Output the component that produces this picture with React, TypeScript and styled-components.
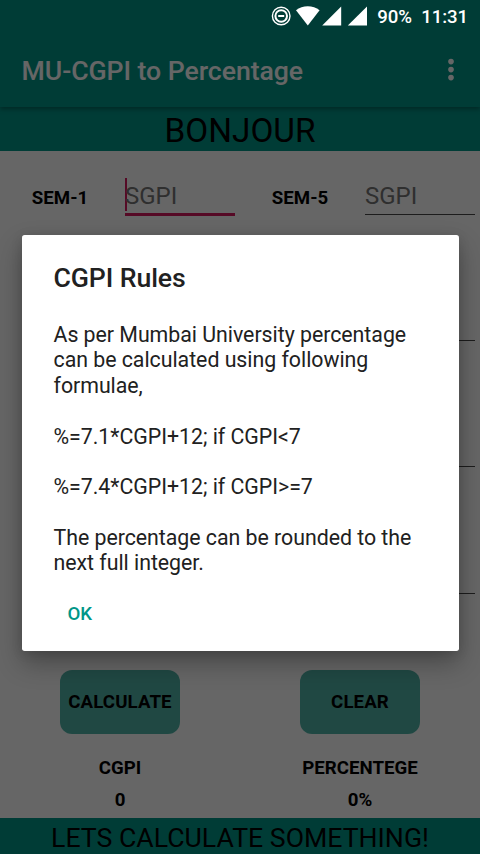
import React from 'react';
import styled, { createGlobalStyle } from 'styled-components';

const GlobalStyle = createGlobalStyle`
  * { box-sizing: border-box; }
  html, body { margin: 0; padding: 0; }
  body { font-family: Roboto, sans-serif; overflow: hidden; background: #fff; }
  button { font-family: inherit; border: 0; padding: 0; cursor: pointer; }
`;

const Screen = styled.div`
  position: relative;
  width: 480px;
  height: 854px;
  display: flex;
  flex-direction: column;
  overflow: hidden;
  background: #fff;
  color: #000;
`;

const StatusBar = styled.div`
  position: relative;
  z-index: 3;
  flex: 0 0 32px;
  display: flex;
  align-items: center;
  justify-content: flex-end;
  padding-right: 12px;
  background: #003c36;
  color: #fff;
  font-size: 18.67px;
  font-weight: 500;
`;

const StatusIcons = styled.svg`
  width: 98px;
  height: 24px;
  margin-right: 9px;
  display: block;
`;

const StatusText = styled.span<{ $width: number }>`
  width: ${(p) => p.$width}px;
  text-align: right;
  line-height: 22px;
  padding-top: 1px;
  letter-spacing: -0.1px;
`;

const AppBar = styled.header`
  position: relative;
  z-index: 1;
  flex: 0 0 75px;
  display: flex;
  align-items: center;
  justify-content: space-between;
  padding: 1px 25px 0 21.5px;
  background: #009688;
  box-shadow: 0 2px 5px rgba(0, 0, 0, 0.35);
`;

const AppTitle = styled.h1`
  margin: 0;
  padding-top: 1px;
  color: #fff;
  font-size: 26.67px;
  font-weight: 500;
  letter-spacing: -0.06px;
  line-height: 32px;
  white-space: nowrap;
`;

const MoreIcon = styled.svg`
  width: 8px;
  height: 24px;
  display: block;
`;

const Banner = styled.div<{ $height: number; $size: number; $top: number }>`
  flex: 0 0 ${(p) => p.$height}px;
  display: flex;
  align-items: center;
  justify-content: center;
  padding-top: ${(p) => p.$top}px;
  background: #009688;
  font-size: ${(p) => p.$size}px;
  line-height: 32px;
  white-space: nowrap;
`;

const Form = styled.main`
  flex: 1;
  display: flex;
  flex-direction: column;
`;

const Semesters = styled.div`
  display: grid;
  grid-template-columns: repeat(4, 120px);
  grid-auto-rows: 92px;
  row-gap: 34.2px;
`;

const SemLabel = styled.label`
  display: flex;
  align-items: center;
  justify-content: center;
  padding-top: 1px;
  font-size: 18.67px;
  font-weight: 700;
`;

const Field = styled.div<{ $focused?: boolean }>`
  height: ${(p) => (p.$focused ? 38 : 37)}px;
  margin: 27px 5px 0;
  display: flex;
  align-items: center;
  border-bottom: ${(p) => (p.$focused ? '3px solid #d81b60' : '1px solid #4a4a4a')};
  color: #757575;
  font-size: 24px;
`;

const Caret = styled.span`
  width: 2px;
  height: 33px;
  margin: -2px -2px 0 0;
  background: #d81b60;
`;

const Columns = styled.div<{ $top: number }>`
  display: grid;
  grid-template-columns: 1fr 1fr;
  justify-items: center;
  margin-top: ${(p) => p.$top}px;
`;

const ActionButton = styled.button`
  width: 120px;
  height: 64px;
  padding-top: 1px;
  border-radius: 12px;
  background: #52b5a9;
  color: #000;
  font-size: 18.67px;
  font-weight: 700;
  letter-spacing: 0.1px;
`;

const Result = styled.div`
  font-size: 18.67px;
  font-weight: 700;
  line-height: 22px;
`;

const Scrim = styled.div`
  position: absolute;
  inset: 0;
  z-index: 2;
  display: flex;
  justify-content: center;
  align-items: flex-start;
  padding-top: 235px;
  background: rgba(0, 0, 0, 0.6);
`;

const Dialog = styled.section`
  width: 437px;
  height: 416px;
  padding: 27px 32px 0;
  border-radius: 2.67px;
  background: #fff;
  color: #212121;
  box-shadow: 0 12px 26px rgba(0, 0, 0, 0.3), 0 2px 12px rgba(0, 0, 0, 0.12);
`;

const DialogTitle = styled.h2`
  margin: 0 0 27px;
  font-size: 26.67px;
  font-weight: 500;
  letter-spacing: -0.1px;
  line-height: 33px;
`;

const Rule = styled.p`
  margin: 0 0 25.3px;
  font-size: 21.33px;
  letter-spacing: -0.03px;
  line-height: 25.4px;
  white-space: pre-line;
`;

const OkButton = styled.button`
  display: block;
  margin: 27px 0 0 14px;
  height: 22px;
  background: none;
  color: #009688;
  font-size: 18.67px;
  font-weight: 500;
  line-height: 22px;
`;

const rules = [
  'As per Mumbai University percentage\ncan be calculated using following\nformulae,',
  '%=7.1*CGPI+12; if CGPI<7',
  '%=7.4*CGPI+12; if CGPI>=7',
  'The percentage can be rounded to the\nnext full integer.',
];

interface SemesterProps {
  label?: string;
  hint?: string;
  focused?: boolean;
}

const semesters: SemesterProps[] = [
  { label: 'SEM-1', hint: 'SGPI', focused: true },
  { label: 'SEM-5', hint: 'SGPI' },
  {}, {},
  {}, {},
  {}, {},
];

function Semester({ label, hint, focused }: SemesterProps) {
  return (
    <>
      <SemLabel>{label}</SemLabel>
      <Field $focused={focused}>
        {focused && <Caret />}
        {hint}
      </Field>
    </>
  );
}

export default function App() {
  return (
    <Screen>
      <GlobalStyle />
      <StatusBar>
        <StatusIcons viewBox="0 0 98 24" fill="none">
          <circle cx="11.2" cy="12" r="8.8" stroke="#fff" strokeWidth="1.4" />
          <circle cx="11.2" cy="12" r="5.8" stroke="#fff" strokeWidth="2" />
          <path d="M8.2 12h6" stroke="#fff" strokeWidth="2" />
          <path d="M26 6.2C32.5 1 43 1 49.6 6.2L37.8 21.4Z" fill="#fff" />
          <path d="M71.2 2.6V21.6H52.2Z" fill="#fff" />
          <path d="M97 2.6V21.6H77.8Z" fill="#fff" />
        </StatusIcons>
        <StatusText $width={35}>90%</StatusText>
        <StatusText $width={56}>11:31</StatusText>
      </StatusBar>
      <AppBar>
        <AppTitle>MU-CGPI to Percentage</AppTitle>
        <MoreIcon viewBox="0 0 8 24" fill="#fff">
          <circle cx="4" cy="3.6" r="2.8" />
          <circle cx="4" cy="11.6" r="2.8" />
          <circle cx="4" cy="19.6" r="2.8" />
        </MoreIcon>
      </AppBar>
      <Banner $height={44} $size={33.33} $top={4}>BONJOUR</Banner>
      <Form>
        <Semesters>
          {semesters.map((semester, i) => (
            <Semester key={i} {...semester} />
          ))}
        </Semesters>
        <Columns $top={48.4}>
          <ActionButton>CALCULATE</ActionButton>
          <ActionButton>CLEAR</ActionButton>
        </Columns>
        <Columns $top={23}>
          <Result>CGPI</Result>
          <Result>PERCENTEGE</Result>
        </Columns>
        <Columns $top={10}>
          <Result>0</Result>
          <Result>0%</Result>
        </Columns>
      </Form>
      <Banner $height={36} $size={26.67} $top={4}>LETS CALCULATE SOMETHING!</Banner>
      <Scrim>
        <Dialog role="dialog">
          <DialogTitle>CGPI Rules</DialogTitle>
          {rules.map((text) => (
            <Rule key={text}>{text}</Rule>
          ))}
          <OkButton>OK</OkButton>
        </Dialog>
      </Scrim>
    </Screen>
  );
}
